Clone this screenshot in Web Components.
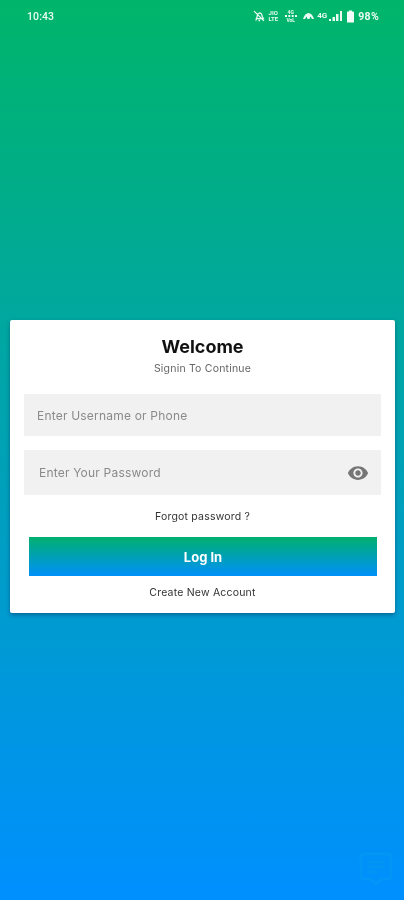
<!DOCTYPE html>
<html>
<head>
<meta charset="utf-8">
<title>Login</title>
<style>
  html, body { margin: 0; padding: 0; }
  body { width: 404px; height: 900px; overflow: hidden; font-family: Inter, "Liberation Sans", sans-serif; }
</style>
</head>
<body>
<login-screen>
  <status-bar slot="status"></status-bar>
  <login-card>
    <text-field placeholder="Enter Username or Phone"></text-field>
    <text-field placeholder="Enter Your Password" password></text-field>
  </login-card>
</login-screen>

<script>
class LoginScreen extends HTMLElement {
  constructor() {
    super();
    this.attachShadow({ mode: "open" });
    this.shadowRoot.innerHTML = `
      <style>
        :host {
          display: flex;
          flex-direction: column;
          position: relative;
          width: 404px;
          height: 900px;
          background: linear-gradient(180deg, #00b56a 0%, #008fff 100%);
        }
        .card-wrap { padding: 289px 9px 0 10px; }
        .watermark { position: absolute; left: 359px; top: 852px; width: 34px; height: 34px; opacity: .08; filter: blur(.6px); }
      </style>
      <slot name="status"></slot>
      <div class="card-wrap"><slot></slot></div>
      <svg class="watermark" viewBox="0 0 34 34" fill="none" stroke="#2fd0c0" stroke-width="3">
        <path d="M5 2h24q3 0 3 3v19q0 3-3 3h-7l-5 5-5-5H5q-3 0-3-3V5q0-3 3-3z"/>
        <path d="M9 10h16M9 15h16M9 20h10"/>
      </svg>
    `;
  }
}

class StatusBar extends HTMLElement {
  constructor() {
    super();
    this.attachShadow({ mode: "open" });
    this.shadowRoot.innerHTML = `
      <style>
        :host {
          display: flex;
          align-items: center;
          height: 31px;
          padding: 1px 25px 0 27px;
          box-sizing: border-box;
          color: #e9fbf2;
          font: 500 10px Roboto, "Liberation Sans", sans-serif;
          filter: blur(.4px);
        }
        .time { flex: 1; font-size: 10.5px; letter-spacing: .1px; }
        .icons { display: flex; align-items: center; }
        svg { display: block; fill: none; stroke: #e9fbf2; }
        .net { font-size: 6px; line-height: 6px; text-align: center; font-weight: 700; }
        .stack { display: flex; flex-direction: column; align-items: center; font-size: 5px; font-weight: 700; line-height: 6px; }
        .pct { font-size: 10.5px; font-weight: 700; margin-left: 4px; letter-spacing: .3px; }
      </style>
      <span class="time">10:43</span>
      <div class="icons">
        <svg width="12" height="12" viewBox="0 0 11 11" stroke-width="1.2" style="margin-right:3px">
          <path d="M1 1l9 9M3 8.500c1-1.500.6-3.400 1.400-4.800C5 2.700 6.400 2.400 7.400 3.200c.8.700.8 2.300 1.300 3.300l.8 1.400H3zM5 9.600h1.500"/>
        </svg>
        <span class="net" style="margin-right:6px;width:10px">JIO<br>LTE</span>
        <span class="stack" style="margin-right:6px;width:13px">
          <span>4G</span>
          <svg width="12" height="2" viewBox="0 0 12 2" style="stroke:none;fill:#e9fbf2"><path d="M0 0h2v2H0zM3.300 0h2v2h-2zM6.700 0h2v2h-2zM10 0h2v2h-2z"/></svg>
          <span>VoL</span>
        </span>
        <svg width="11" height="8" viewBox="0 0 11 8" style="margin-right:3px;stroke:none;fill:#e9fbf2">
          <path d="M0 7C1 3 3.500 1 5.500 1S10 3 11 7H9L7.500 4.500 6.500 7h-2L3.500 4.500 2 7z"/>
        </svg>
        <span class="net" style="font-size:8px;margin-right:2px">4G</span>
        <svg width="13" height="10" viewBox="0 0 13 10" style="stroke:none;fill:#e9fbf2;margin-right:5px">
          <path d="M0 8h2v2H0zM3.500 6H6v4H3.500zM7 3h2.500v7H7zM11 0h2v10h-2z"/>
        </svg>
        <svg width="7" height="13" viewBox="0 0 7 12" style="stroke:none;fill:#f3fff9">
          <path d="M2 0h3v1h1.200q.8 0 .8.800V12H0V1.800Q0 1 .8 1H2z"/>
        </svg>
        <span class="pct">98%</span>
      </div>
    `;
  }
}

class LoginCard extends HTMLElement {
  constructor() {
    super();
    this.attachShadow({ mode: "open" });
    this.shadowRoot.innerHTML = `
      <style>
        :host {
          display: flex;
          flex-direction: column;
          align-items: stretch;
          box-sizing: border-box;
          width: 385px;
          height: 293px;
          padding: 0 14px;
          background: #fff;
          border-radius: 2px;
          box-shadow: 0 2px 4px rgba(0, 40, 90, .45);
          text-align: center;
          color: #1c1c1c;
          filter: blur(.3px);
        }
        h1 { margin: 16px 0 0; font: 700 18px/22px Inter, "Liberation Sans", sans-serif; color: #111; }
        .sub { margin: 4px 0 0; font-size: 10.5px; line-height: 14px; color: #666; letter-spacing: .2px; }
        .fields { display: flex; flex-direction: column; gap: 14px; margin-top: 18px; }
        .forgot { margin: 15px 0 0; font-size: 10.5px; line-height: 14px; color: #333; letter-spacing: .2px; }
        .create { margin: 10px 0 0; font-size: 10.5px; line-height: 14px; color: #333; letter-spacing: .2px; }
        gradient-button { margin-top: 13px; }
      </style>
      <h1>Welcome</h1>
      <p class="sub">Signin To Continue</p>
      <div class="fields"><slot></slot></div>
      <p class="forgot">Forgot password ?</p>
      <gradient-button>Log In</gradient-button>
      <p class="create">Create New Account</p>
    `;
  }
}

class TextField extends HTMLElement {
  constructor() {
    super();
    this.attachShadow({ mode: "open" });
    const isPassword = this.hasAttribute("password");
    this.shadowRoot.innerHTML = `
      <style>
        :host {
          display: flex;
          align-items: center;
          justify-content: space-between;
          box-sizing: border-box;
          height: ${isPassword ? 45 : 42}px;
          padding: 0 12px 0 ${isPassword ? 15 : 13}px;
          background: #f1f1f1;
          color: #8a8a8a;
          font-size: 12px;
          letter-spacing: .2px;
        }
        svg { display: block; fill: #757575; }
      </style>
      <span>${this.getAttribute("placeholder")}</span>
      ${isPassword ? `<svg width="22" height="22" viewBox="0 0 24 24"><path d="M12 4.500C7 4.500 2.730 7.610 1 12c1.730 4.390 6 7.500 11 7.500s9.270-3.110 11-7.500c-1.730-4.390-6-7.500-11-7.500zM12 17c-2.760 0-5-2.240-5-5s2.240-5 5-5 5 2.240 5 5-2.240 5-5 5zm0-8c-1.660 0-3 1.340-3 3s1.340 3 3 3 3-1.340 3-3-1.340-3-3-3z"/></svg>` : ""}
    `;
  }
}

class GradientButton extends HTMLElement {
  constructor() {
    super();
    this.attachShadow({ mode: "open" });
    this.shadowRoot.innerHTML = `
      <style>
        :host {
          display: flex;
          align-items: center;
          justify-content: center;
          height: 39px;
          margin-inline: 5px 4px;
          background: linear-gradient(180deg, #00b06e 0%, #0090fa 100%);
          color: #fff;
          font-size: 13px;
          font-weight: 700;
        }
      </style>
      <slot></slot>
    `;
  }
}

customElements.define("login-screen", LoginScreen);
customElements.define("status-bar", StatusBar);
customElements.define("login-card", LoginCard);
customElements.define("text-field", TextField);
customElements.define("gradient-button", GradientButton);
</script>
</body>
</html>
